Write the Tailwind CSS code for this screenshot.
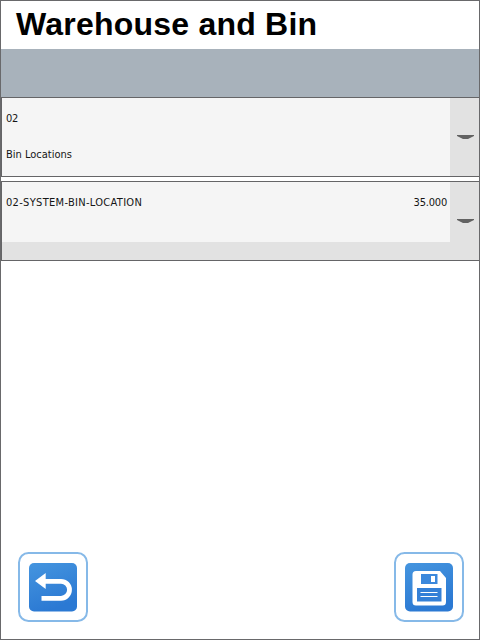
<!DOCTYPE html>
<html lang="en">
<head>
<meta charset="utf-8">
<title>Warehouse and Bin</title>
<script src="https://cdn.jsdelivr.net/npm/@tailwindcss/browser@4"></script>
</head>
<body class="bg-white">
<main class="flex h-[640px] w-[480px] flex-col overflow-hidden border border-[#69696b] bg-white font-['DejaVu_Sans_Condensed','DejaVu_Sans',sans-serif] text-[11px] leading-[14px] text-[#151515]">
  <h1 class="h-12 shrink-0 whitespace-nowrap pl-[15px] pt-[5px] font-['Liberation_Sans',Arial,sans-serif] text-[32px] font-bold leading-9 tracking-[0.22px] text-black">Warehouse and Bin</h1>
  <div class="h-12 shrink-0 bg-[#a8b2bb]"></div>
  <section class="flex h-20 shrink-0 border-y border-l border-[#656567] bg-[#e2e2e2]">
    <div class="flex w-[448px] flex-col gap-[22px] bg-[#f5f5f5] pl-1 pt-[14px]">
      <span class="tracking-[-0.3px]">02</span>
      <span>Bin Locations</span>
    </div>
    <div class="flex flex-1 items-center justify-center">
      <svg class="mb-px ml-0.5 h-1 w-[17px]" viewBox="0 0 17 4" fill="#626262"><path d="M0 0H17V1L11 4H6L0 1Z"/></svg>
    </div>
  </section>
  <section class="mt-1 flex h-20 shrink-0 border-y border-l border-[#656567] bg-[#e2e2e2]">
    <div class="flex h-[60px] w-[448px] justify-between bg-[#f5f5f5] pl-1 pr-[3px] pt-[14px]">
      <span class="tracking-[0.31px]">02-SYSTEM-BIN-LOCATION</span>
      <span class="tracking-[-0.2px]">35.000</span>
    </div>
    <div class="flex flex-1 items-center justify-center">
      <svg class="mb-px ml-0.5 h-1 w-[17px]" viewBox="0 0 17 4" fill="#626262"><path d="M0 0H17V1L11 4H6L0 1Z"/></svg>
    </div>
  </section>
  <footer class="mt-auto flex justify-between pb-[17px] pl-[17px] pr-[15px]">
    <button aria-label="Back" class="size-[70px]">
      <svg class="size-[70px]" viewBox="0 0 70 70">
        <defs><linearGradient id="blue" x1="0" y1="0" x2="0.35" y2="1"><stop stop-color="#4595df"/><stop offset="1" stop-color="#2b79d3"/></linearGradient></defs>
        <rect x="1" y="1" width="68" height="68" rx="9.5" fill="#fff" stroke="#86b9e8" stroke-width="2"/>
        <rect x="11" y="11" width="48" height="48.5" rx="5" fill="url(#blue)"/>
        <path d="M26 29.300H43a8.500 8.500 0 0 1 0 17H23.500" fill="none" stroke="#fff" stroke-width="4.800"/>
        <path d="M17 29L27.700 21V37Z" fill="#fff"/>
      </svg>
    </button>
    <button aria-label="Save" class="size-[70px]">
      <svg class="size-[70px]" viewBox="0 0 70 70">
        <rect x="1" y="1" width="68" height="68" rx="9.5" fill="#fff" stroke="#86b9e8" stroke-width="2"/>
        <rect x="11" y="11" width="48" height="48.5" rx="5" fill="url(#blue)"/>
        <path d="M22 19H46L52 26V50a3.500 3.500 0 0 1-3.500 3.500H22a3.500 3.500 0 0 1-3.500-3.500V22.500A3.500 3.500 0 0 1 22 19Z" fill="#fff"/>
        <path d="M27 22H43.500V32H27Z" fill="#3b88dc"/>
        <path d="M37 24H41V30H37Z" fill="#fff"/>
        <path d="M23 36H47.500V49.500H23Z" fill="#3480d7"/>
        <path d="M26.500 40.500H43.500M26.500 44.500H43.500" stroke="#fff" stroke-width="1.200"/>
      </svg>
    </button>
  </footer>
</main>
</body>
</html>
